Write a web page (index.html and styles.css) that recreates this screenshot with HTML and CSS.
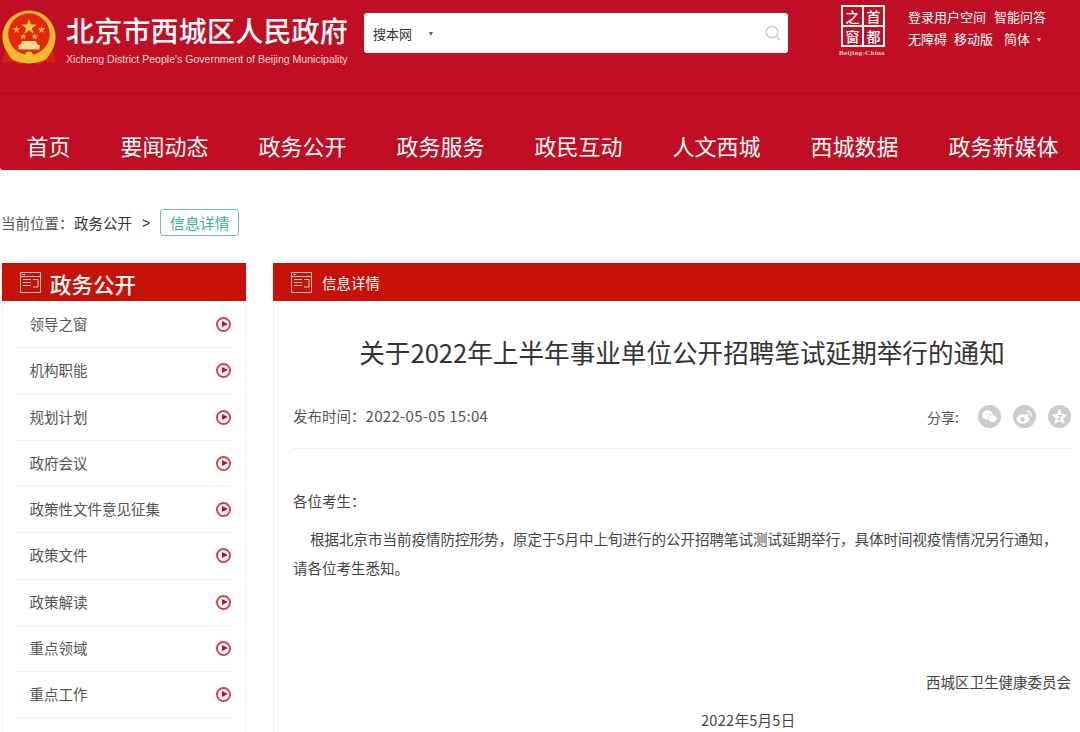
FILE: index.html
```html
<!DOCTYPE html>
<html lang="zh-CN">
<head>
  <meta charset="UTF-8">
  <meta name="viewport" content="width=device-width, initial-scale=1.0">
  <title>关于2022年上半年事业单位公开招聘笔试延期举行的通知</title>
  <link rel="stylesheet" href="styles.css">
</head>
<body>

<header id="site-header">
  <div class="top-bar">
    <svg class="emblem" viewBox="0 0 60 60" width="58" height="58">
      <path d="M6 42 L2 55 L12 53 L20 58 L30 52 L40 58 L48 53 L58 55 L54 42 Z" fill="#e02a12"/>
      <circle cx="30" cy="29" r="27.5" fill="#f2b92c"/>
      <circle cx="30" cy="26" r="21.5" fill="#e4260f"/>
      <polygon points="30,10 32,16 38,16 33,20 35,26 30,22 25,26 27,20 22,16 28,16" fill="#f7c93a"/>
      <polygon points="17,17 18,20 21,20 18.5,22 19.5,25 17,23 14.500,25 15.500,22 13,20 16,20" fill="#f2b92c"/>
      <polygon points="43,17 44,20 47,20 44.500,22 45.500,25 43,23 40.500,25 41.500,22 39,20 42,20" fill="#f2b92c"/>
      <polygon points="24,25 25,27.500 27.500,27.500 25.500,29 26.300,31.500 24,30 21.700,31.500 22.500,29 20.500,27.500 23,27.500" fill="#f2b92c"/>
      <polygon points="36,25 37,27.500 39.500,27.500 37.500,29 38.300,31.500 36,30 33.700,31.500 34.500,29 32.500,27.500 35,27.500" fill="#f2b92c"/>
      <path d="M21 37 L23 33 L37 33 L39 37 L41 37 L41 42 L19 42 L19 37 Z" fill="#f7d98a"/>
      <path d="M8 46 Q30 58 52 46 L48 52 Q30 60 12 52 Z" fill="#f2b92c"/>
      <circle cx="30" cy="48" r="4" fill="#f7c93a"/>
      <path d="M5 44 L3 56 L14 54 Z M55 44 L57 56 L46 54 Z" fill="#d8200e"/>
    </svg>
    <div class="site-name">
      <div class="site-name-cn">北京市西城区人民政府</div>
      <div class="site-name-en">Xicheng District People's Government of Beijing Municipality</div>
    </div>
    <div class="search-box">
      <span class="search-scope">搜本网</span>
      <span class="search-caret"></span>
      <svg class="search-icon" viewBox="0 0 16 16" width="16" height="16">
        <circle cx="7" cy="7" r="5.800" fill="none" stroke="#ccc" stroke-width="1.500"/>
        <path d="M11.500 11.500 L15 15" stroke="#ccc" stroke-width="1.500"/>
      </svg>
    </div>
    <div class="capital-badge">
      <div class="capital-seal">
        <span>之</span><span>首</span><span>窗</span><span>都</span>
      </div>
      <div class="capital-en">Beijing-China</div>
    </div>
    <div class="top-links">
      <div class="top-links-row">
        <a>登录用户空间</a>
        <a>智能问答</a>
      </div>
      <div class="top-links-row">
        <a>无障碍</a>
        <a>移动版</a>
        <a class="lang-link">简体</a>
        <span class="lang-caret"></span>
      </div>
    </div>
  </div>
  <nav class="main-nav">
    <a>首页</a>
    <a>要闻动态</a>
    <a>政务公开</a>
    <a>政务服务</a>
    <a>政民互动</a>
    <a>人文西城</a>
    <a>西城数据</a>
    <a>政务新媒体</a>
  </nav>
</header>

<div class="breadcrumb">
  <span class="crumb-label">当前位置：</span>
  <span class="crumb-link">政务公开</span>
  <span class="crumb-sep">&gt;</span>
  <span class="crumb-tag">信息详情</span>
</div>

<div class="content">
  <aside class="sidebar">
    <div class="panel-title">
      <svg class="panel-icon" viewBox="0 0 21 21" width="21" height="21">
        <path d="M.5.500H20.500V20.500H.5Z M.5 4.500H20.500 M3 7.500H11 M3 10.500H11 M3 13.500H11 M13 7.500H18V15H13 M2 2.500H5" fill="none" stroke="#f3c6c0" stroke-width="1"/>
      </svg>
      <span class="sidebar-title">政务公开</span>
    </div>
    <ul class="side-menu">
      <li><span class="menu-text">领导之窗</span><span class="arrow"></span></li>
      <li><span class="menu-text">机构职能</span><span class="arrow"></span></li>
      <li><span class="menu-text">规划计划</span><span class="arrow"></span></li>
      <li><span class="menu-text">政府会议</span><span class="arrow"></span></li>
      <li><span class="menu-text">政策性文件意见征集</span><span class="arrow"></span></li>
      <li><span class="menu-text">政策文件</span><span class="arrow"></span></li>
      <li><span class="menu-text">政策解读</span><span class="arrow"></span></li>
      <li><span class="menu-text">重点领域</span><span class="arrow"></span></li>
      <li><span class="menu-text">重点工作</span><span class="arrow"></span></li>
    </ul>
  </aside>

  <main class="detail">
    <div class="panel-title">
      <svg class="panel-icon" viewBox="0 0 21 21" width="21" height="21">
        <path d="M.5.500H20.500V20.500H.5Z M.5 4.500H20.500 M3 7.500H11 M3 10.500H11 M3 13.500H11 M13 7.500H18V15H13 M2 2.500H5" fill="none" stroke="#f3c6c0" stroke-width="1"/>
      </svg>
      <span class="detail-label">信息详情</span>
    </div>
    <div class="article">
      <h1>关于2022年上半年事业单位公开招聘笔试延期举行的通知</h1>
      <div class="meta">
        <span class="pub-time">发布时间：<span class="pub-value">2022-05-05 15:04</span></span>
        <div class="share">
          <span class="share-label">分享:</span>
          <span class="share-btn">
            <svg viewBox="0 0 23 23" width="23" height="23">
              <ellipse cx="9.500" cy="10" rx="5.500" ry="4.700" fill="#fff"/>
              <ellipse cx="14.500" cy="13.500" rx="4.500" ry="3.800" fill="#fff" stroke="#ccc" stroke-width=".8"/>
              <circle cx="7.800" cy="9" r=".8" fill="#ccc"/>
              <circle cx="11" cy="9" r=".8" fill="#ccc"/>
            </svg>
          </span>
          <span class="share-btn">
            <svg viewBox="0 0 23 23" width="23" height="23">
              <ellipse cx="10" cy="14" rx="6.500" ry="4.700" fill="#fff"/>
              <circle cx="9.500" cy="14.500" r="2.300" fill="#ccc"/>
              <path d="M13.500 6 A5 5 0 0 1 18.500 11.500" fill="none" stroke="#fff" stroke-width="1.400"/>
              <path d="M13.500 8.800 A2.400 2.400 0 0 1 15.800 11.300" fill="none" stroke="#fff" stroke-width="1.200"/>
            </svg>
          </span>
          <span class="share-btn">
            <svg viewBox="0 0 23 23" width="23" height="23">
              <polygon points="11.500,3.500 14,9 19.500,9.500 15.300,13.300 16.500,19 11.500,16 6.500,19 7.700,13.300 3.500,9.500 9,9" fill="#fff"/>
              <path d="M9.500 10.500H13.500L9.800 14.500H13.500" fill="none" stroke="#ccc" stroke-width="1.200"/>
            </svg>
          </span>
        </div>
      </div>
      <div class="article-body">
        <p class="greeting">各位考生：</p>
        <p class="para">根据北京市当前疫情防控形势，原定于5月中上旬进行的公开招聘笔试测试延期举行，具体时间视疫情情况另行通知，请各位考生悉知。</p>
        <p class="signature">西城区卫生健康委员会</p>
        <p class="sign-date">2022年5月5日</p>
      </div>
    </div>
  </main>
</div>

</body>
</html>
```

FILE: styles.css
```css
html, body {
  margin: 0;
  height: 732px;
  overflow: hidden;
}

body {
  background-color: #fff;
  font-family: "Noto Sans CJK SC", "Liberation Sans", sans-serif;
  color: #333;
}

#site-header {
  background-color: #c00f24;
  border-bottom-left-radius: 3px;
  height: 170px;
  color: #fff;
}

.top-bar {
  display: flex;
  height: 93px;
  border-bottom: 1px solid #a80d1f;
  box-sizing: content-box;
}

.emblem {
  margin: 9px 0 0 0;
  flex: none;
}

.site-name {
  margin-left: 8px;
  width: 290px;
}

.site-name-cn {
  margin-top: 10px;
  font-size: 28px;
  line-height: 40px;
  font-weight: 500;
  letter-spacing: .2px;
  white-space: nowrap;
}

.site-name-en {
  margin-top: 2px;
  font-family: "Liberation Sans", sans-serif;
  font-size: 10.550px;
  line-height: 14px;
  color: #f5d5d8;
  white-space: nowrap;
}

.search-box {
  display: flex;
  align-items: center;
  margin: 13px 0 0 8px;
  width: 424px;
  height: 40px;
  background-color: #fff;
  border-radius: 3px;
  flex: none;
}

.search-scope {
  margin-left: 9px;
  font-size: 13px;
  color: #333;
}

.search-caret {
  margin: 1px 0 0 17px;
  border-top: 4px solid #666;
  border-left: 2.500px solid transparent;
  border-right: 2.500px solid transparent;
}

.search-icon {
  margin-left: auto;
  margin-right: 7px;
}

.capital-badge {
  margin: 5px 0 0 53px;
  width: 44px;
  flex: none;
}

.capital-seal {
  display: grid;
  grid-template-columns: 1fr 1fr;
  grid-template-rows: 1fr 1fr;
  box-sizing: border-box;
  width: 44px;
  height: 42px;
  background-color: #fff;
  border: 2px solid #fff;
  gap: 2px;
}

.capital-seal span {
  display: flex;
  align-items: center;
  justify-content: center;
  background-color: #c00f24;
  font-size: 14px;
  font-weight: 500;
  line-height: 1;
}

.capital-en {
  margin: 1px 0 0 -2px;
  width: 52px;
  font-family: "Liberation Serif", serif;
  font-size: 7px;
  font-weight: 700;
  letter-spacing: .3px;
  line-height: 10px;
  color: #f0c8cc;
  white-space: nowrap;
}

.top-links {
  margin: 6px 0 0 23px;
  font-size: 13px;
  line-height: 22px;
}

.top-links-row {
  display: flex;
  align-items: center;
  gap: 7px;
  white-space: nowrap;
}

.top-links-row:first-child {
  gap: 8px;
}

.lang-link {
  margin-left: 4px;
}

.lang-caret {
  margin: 1px 0 0 0;
  border-top: 4px solid #e8c9a8;
  border-left: 2px solid transparent;
  border-right: 2px solid transparent;
}

.main-nav {
  display: flex;
  gap: 50px;
  padding-left: 26.500px;
  font-size: 22px;
  line-height: 30px;
  padding-top: 36px;
  white-space: nowrap;
}

.breadcrumb {
  display: flex;
  align-items: center;
  height: 27px;
  margin-top: 39px;
  padding-left: 1px;
  font-size: 14.500px;
}

.crumb-label {
  color: #555;
  width: 73px;
  white-space: nowrap;
}

.crumb-sep {
  margin: 0 10px;
  font-family: "Liberation Sans", sans-serif;
  font-size: 14px;
}

.crumb-tag {
  box-sizing: border-box;
  width: 79px;
  height: 27px;
  border: 1px solid #6cc5a8;
  border-radius: 3px;
  color: #3fae8c;
  font-size: 15px;
  line-height: 25px;
  text-align: center;
}

.content {
  display: flex;
  gap: 27px;
  margin-top: 27px;
  padding-left: 2px;
}

.panel-title {
  display: flex;
  align-items: center;
  height: 38px;
  padding-left: 18px;
  color: #fff;
  background-color: #c81207;
  background-image:
    radial-gradient(circle at 20px 24px, transparent 17px, rgba(160, 10, 0, .16) 18px, transparent 19px),
    radial-gradient(circle at 0 14px, transparent 17px, rgba(160, 10, 0, .16) 18px, transparent 19px);
  background-size: 40px 20px;
}

.panel-icon {
  flex: none;
}

.sidebar {
  width: 244px;
  flex: none;
}

.sidebar-title {
  margin-left: 9px;
  font-size: 21.500px;
  line-height: 34px;
  height: 38px;
  padding-top: 4px;
  box-sizing: border-box;
  font-weight: 500;
}

.side-menu {
  list-style: none;
  box-sizing: border-box;
  margin: 0;
  height: 431px;
  padding: 1px 13px 0;
  border-left: 1px solid #f0f0f0;
  border-right: 1px solid #f0f0f0;
}

.side-menu li {
  display: flex;
  align-items: center;
  justify-content: space-between;
  box-sizing: border-box;
  height: 46.250px;
  padding-left: 13.500px;
  border-bottom: 1px solid #f0f0f0;
  font-size: 14.500px;
  color: #555;
}

.menu-text {
  padding-bottom: 2px;
}

.arrow {
  position: relative;
  box-sizing: border-box;
  width: 15px;
  height: 15px;
  margin-right: 1px;
  border: 2px solid #d4414f;
  border-radius: 50%;
}

.arrow::after {
  content: "";
  position: absolute;
  left: 3.500px;
  top: 2px;
  border-left: 6px solid #c00f24;
  border-top: 3.500px solid transparent;
  border-bottom: 3.500px solid transparent;
}

.detail {
  flex: 1;
}

.detail-label {
  margin-left: 10px;
  font-size: 14.500px;
}

.article {
  height: 431px;
  padding: 0 9px 0 19px;
  border-left: 1px solid #f0f0f0;
}

h1 {
  margin: 0;
  padding-top: 33px;
  font-size: 25.600px;
  line-height: 36px;
  font-weight: 400;
  text-align: center;
  white-space: nowrap;
}

.meta {
  display: flex;
  justify-content: space-between;
  height: 51px;
  margin-top: 28px;
  border-bottom: 1px solid #f0f0f0;
  box-sizing: border-box;
}

.pub-time {
  font-size: 14.500px;
  line-height: 36px;
  color: #555;
}

.pub-value {
  font-size: 15px;
  letter-spacing: .3px;
}

.share {
  display: flex;
  align-items: flex-start;
  gap: 12px;
  margin-top: 7px;
}

.share-label {
  margin-right: 7px;
  font-size: 14px;
  line-height: 24px;
  color: #555;
}

.share-btn {
  width: 23px;
  height: 23px;
  margin-top: 0;
  background-color: #ccc;
  border-radius: 50%;
}

.share-btn svg {
  display: block;
}

.article-body {
  font-size: 14.500px;
  line-height: 29px;
  color: #444;
}

.article-body p {
  margin: 0;
}

.greeting {
  padding-top: 37px;
}

.para {
  padding-top: 9px;
  text-indent: 17px;
}

.signature {
  padding-top: 85px;
  text-align: right;
}

.sign-date {
  padding-top: 9px;
  padding-left: 408px;
  letter-spacing: .3px;
}
```
